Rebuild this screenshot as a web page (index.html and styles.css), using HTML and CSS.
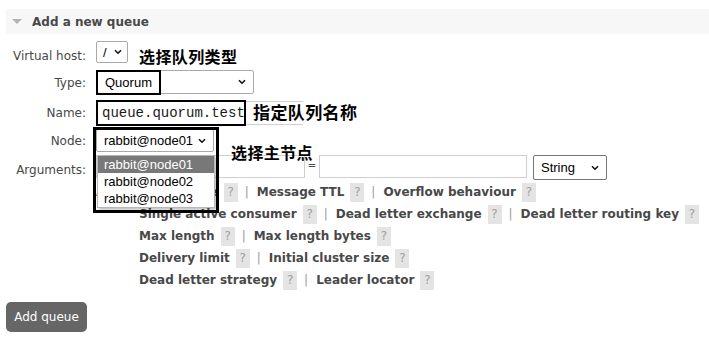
FILE: index.html
```html
<!DOCTYPE html>
<html lang="en">
<head>
<meta charset="utf-8">
<title>Add a new queue</title>
<link rel="stylesheet" href="styles.css">
</head>
<body>
<div class="page">
  <div class="section-head">
    <span class="tri"></span>
    <h2>Add a new queue</h2>
  </div>

  <div class="form">
    <label class="lbl lbl-low">Virtual host:</label>
    <div class="field">
      <div class="select sel-vhost"><span>/</span><svg class="chev" width="8" height="6" viewBox="0 0 8 6"><path d="M1 1.2 L4 4.2 L7 1.2" fill="none" stroke="#111" stroke-width="1.6"/></svg></div>
    </div>

    <label class="lbl">Type:</label>
    <div class="field">
      <div class="select sel-type"><span>Quorum</span><svg class="chev" width="8" height="6" viewBox="0 0 8 6"><path d="M1 1.2 L4 4.2 L7 1.2" fill="none" stroke="#111" stroke-width="1.6"/></svg></div>
    </div>

    <label class="lbl lbl-name">Name:</label>
    <div class="field">
      <div class="input input-name">queue.quorum.test</div>
    </div>

    <label class="lbl lbl-name">Node:</label>
    <div class="field">
      <div class="select sel-node"><span>rabbit@node01</span><svg class="chev" width="8" height="6" viewBox="0 0 8 6"><path d="M1 1.2 L4 4.2 L7 1.2" fill="none" stroke="#111" stroke-width="1.6"/></svg></div>
    </div>

    <label class="lbl lbl-low">Arguments:</label>
    <div class="field">
      <div class="args">
        <div class="input input-key"></div>
        <span class="eq">=</span>
        <div class="input input-val"></div>
        <div class="select sel-str"><span>String</span><svg class="chev" width="8" height="6" viewBox="0 0 8 6"><path d="M1 1.2 L4 4.2 L7 1.2" fill="none" stroke="#111" stroke-width="1.6"/></svg></div>
      </div>
      <div class="arg-links">
        <div class="add">Add</div>
        <div class="lines">
          <div class="line"><span class="lnk">Auto expire</span><span class="help">?</span><span class="sep">|</span><span class="lnk">Message TTL</span><span class="help">?</span><span class="sep">|</span><span class="lnk">Overflow behaviour</span><span class="help">?</span></div>
          <div class="line"><span class="lnk">Single active consumer</span><span class="help">?</span><span class="sep">|</span><span class="lnk">Dead letter exchange</span><span class="help">?</span><span class="sep">|</span><span class="lnk">Dead letter routing key</span><span class="help">?</span></div>
          <div class="line"><span class="lnk">Max length</span><span class="help">?</span><span class="sep">|</span><span class="lnk">Max length bytes</span><span class="help">?</span></div>
          <div class="line"><span class="lnk">Delivery limit</span><span class="help">?</span><span class="sep">|</span><span class="lnk">Initial cluster size</span><span class="help">?</span></div>
          <div class="line"><span class="lnk">Dead letter strategy</span><span class="help">?</span><span class="sep">|</span><span class="lnk">Leader locator</span><span class="help">?</span></div>
        </div>
      </div>
    </div>
  </div>

  <button class="btn">Add queue</button>

  <!-- annotations drawn over the screenshot -->
  <div class="mark mark-type"></div>
  <div class="mark mark-name"></div>
  <div class="note note-type">选择队列类型</div>
  <div class="note note-name">指定队列名称</div>
  <div class="dropdown">
    <div class="opt opt-on">rabbit@node01</div>
    <div class="opt">rabbit@node02</div>
    <div class="opt">rabbit@node03</div>
  </div>
  <div class="mark mark-node"></div>
  <div class="note note-node">选择主节点</div>
</div>
</body>
</html>
```
FILE: styles.css
```css
* { box-sizing: border-box; }

body {
  margin: 0;
  background: #fff;
  font-family: "DejaVu Sans", Verdana, sans-serif;
  font-size: 12px;
  color: #484848;
}

.page {
  position: relative;
  width: 709px;
  height: 338px;
  padding: 9px 0 0 6px;
  overflow: hidden;
}

.section-head {
  height: 25px;
  background: #f7f7f7;
  display: flex;
  align-items: center;
  padding-left: 6px;
}

.tri {
  width: 0;
  height: 0;
  border-left: 5px solid transparent;
  border-right: 5px solid transparent;
  border-top: 5px solid #b4b4b4;
  margin-right: 10px;
}

.section-head h2 {
  margin: 0;
  font-size: 12px;
  font-weight: bold;
  color: #484848;
}

.form {
  margin-top: 7px;
  display: grid;
  grid-template-columns: 80px 1fr;
  grid-template-rows: 29px 31px 28px 26px auto;
  column-gap: 10px;
  align-items: start;
}

.lbl {
  text-align: right;
  line-height: 14px;
  padding-top: 6px;
  color: #484848;
}
.lbl-low { padding-top: 8px; }
.lbl-name { padding-top: 5px; }

.field { display: block; }

.select {
  display: flex;
  align-items: center;
  justify-content: space-between;
  border: 1px solid #a9a9a9;
  border-radius: 2px;
  background: #fff;
  font-family: "Liberation Sans", Arial, sans-serif;
  font-size: 13px;
  color: #000;
  padding: 0 7px 0 7px;
}
.chev { flex: none; }

.sel-vhost { width: 32px; height: 22px; padding: 0 5px 0 6px; }
.sel-type { width: 157px; height: 24px; margin-left: 1px; }
.sel-node { width: 118px; height: 23px; padding-left: 7px; }
.sel-str { width: 74px; height: 25px; margin-left: 6px; border-color: #767676; }

.input {
  border: 1px solid #cfcfcf;
  background: #fff;
  height: 24px;
}
.input-name {
  width: 206px;
  margin-left: 1px;
  font-family: "Liberation Mono", "Courier New", monospace;
  font-size: 14px;
  color: #1a1a1a;
  line-height: 22px;
  padding-left: 4px;
}

.args {
  display: flex;
  align-items: flex-start;
  height: 26px;
}
.input-key { width: 209px; height: 23px; }
.input-val { width: 208px; height: 23px; }
.eq {
  font-size: 10px;
  color: #484848;
  width: 14px;
  text-align: center;
  padding-top: 5px;
}

.arg-links {
  display: grid;
  grid-template-columns: 43px auto;
}
.add { line-height: 22px; }

.line {
  display: flex;
  align-items: center;
  height: 22px;
  white-space: nowrap;
}
.lnk {
  font-weight: bold;
  color: #484848;
}
.help {
  margin-left: 6px;
  width: 14px;
  height: 19px;
  line-height: 19px;
  text-align: center;
  background: #e4e4e4;
  color: #a0a0a0;
  font-size: 12px;
}
.sep {
  margin: 0 8px 0 7px;
  color: #9a9a9a;
}

.btn {
  display: block;
  margin-top: 11px;
  width: 81px;
  height: 30px;
  border: none;
  border-radius: 5px;
  background: #666;
  color: #fff;
  font-family: "DejaVu Sans", Verdana, sans-serif;
  font-size: 12px;
  padding: 0;
}

/* overlays (screenshot annotations and open dropdown) */
.mark {
  position: absolute;
  border: 2px solid #000;
}
.mark-type { left: 96px; top: 70px; width: 65px; height: 25px; }
.mark-name { left: 96px; top: 100px; width: 150px; height: 26px; }
.mark-node { left: 93px; top: 127px; width: 126px; height: 86px; border-width: 3px; }

.note {
  position: absolute;
  font-family: "Noto Sans CJK SC", sans-serif;
  font-weight: 700;
  font-size: 16px;
  line-height: 20px;
  color: #000;
  background: #fff;
  letter-spacing: 0.4px;
}
.note-type { left: 139px; top: 46px; }
.note-name { left: 247px; top: 102px; padding-left: 6px; font-size: 17px; height: 22px; }
.note-node { left: 231px; top: 142px; background: transparent; }

.dropdown {
  position: absolute;
  left: 97px;
  top: 155px;
  width: 118px;
  background: #fff;
  border: 1px solid #b8b8b8;
  box-shadow: 2px 2px 3px rgba(0, 0, 0, 0.25);
  font-family: "Liberation Sans", Arial, sans-serif;
  font-size: 13px;
  color: #000;
}
.opt {
  height: 17px;
  line-height: 17px;
  padding-left: 6px;
}
.opt-on {
  background: #787878;
  color: #fff;
}
```
